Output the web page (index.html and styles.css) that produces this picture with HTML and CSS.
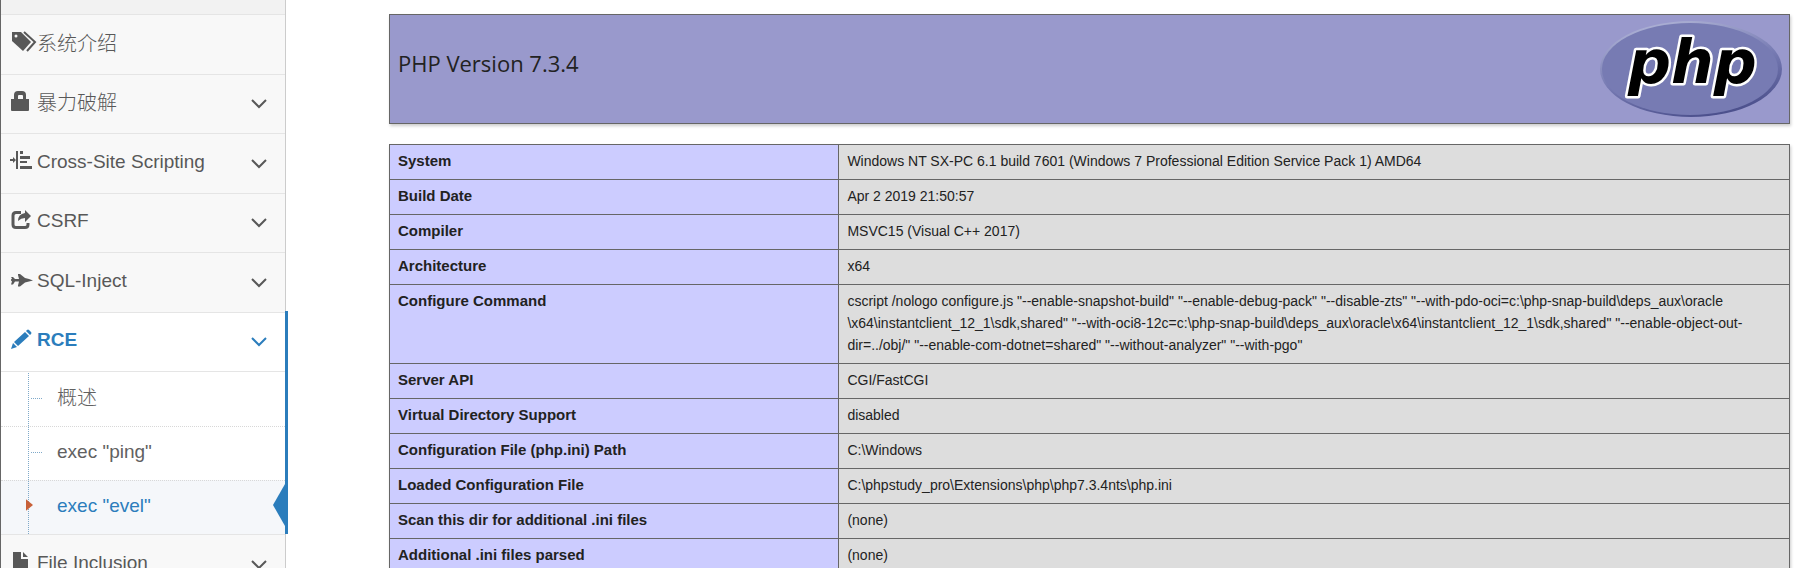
FILE: index.html
```html
<!DOCTYPE html>
<html lang="zh-CN">
<head>
<meta charset="utf-8">
<title>phpinfo</title>
<link rel="stylesheet" href="styles.css">
</head>
<body>
<div class="layout">
  <nav class="sidebar">
    <ul class="menu">
      <li class="menu-item"><a class="menu-link" href="#">
        <svg class="icon wide" viewBox="0 0 26 22"><path d="M1 1h9l10 10-8 9L1 10z"/><circle class="hole" cx="5" cy="5" r="1.5"/><path class="line" d="M13 1l11 10-8 9"/></svg>
        <span class="label han">系统介绍</span></a></li>
      <li class="menu-item"><a class="menu-link" href="#">
        <svg class="icon" viewBox="0 0 22 22"><path d="M0 9h3V5q0-4 4-4h4q4 0 4 4v4h3v11q0 1-1 1H1q-1 0-1-1zM7 9h5V6q0-1-1-1H8q-1 0-1 1z" fill-rule="evenodd"/></svg>
        <span class="label han">暴力破解</span>
        <svg class="chevron" viewBox="0 0 16 10"><path d="M1 1l7 7 7-7"/></svg></a></li>
      <li class="menu-item"><a class="menu-link" href="#">
        <svg class="icon" viewBox="0 0 22 22"><path d="M-1 9h3V7l3 3-3 3v-2h-3zM5 1h2v18H5zM9 1h3v3H9zM9 6h10v3H9zM9 11h7v2H9zM9 16h12v3H9z"/></svg>
        <span class="label">Cross-Site Scripting</span>
        <svg class="chevron" viewBox="0 0 16 10"><path d="M1 1l7 7 7-7"/></svg></a></li>
      <li class="menu-item"><a class="menu-link" href="#">
        <svg class="icon" viewBox="0 0 22 22"><path class="thick" d="M10 3.500H5Q2 3.500 2 6.500v9q0 3 3 3h9q3 0 3-3V14"/><path d="M7 12q0-7 7-8V1l6 6-6 6V9q-4 0-7 3z"/></svg>
        <span class="label">CSRF</span>
        <svg class="chevron" viewBox="0 0 16 10"><path d="M1 1l7 7 7-7"/></svg></a></li>
      <li class="menu-item"><a class="menu-link" href="#">
        <svg class="icon" viewBox="0 0 22 22"><path d="M0 8h2l2 2h4L7 6V5h2l5 4 4 1 4 1.500-4 1-4 1-5 4H7v-1l1-4H4l-2 3H0l1-3-1-1v-1l1-1z"/></svg>
        <span class="label">SQL-Inject</span>
        <svg class="chevron" viewBox="0 0 16 10"><path d="M1 1l7 7 7-7"/></svg></a></li>
      <li class="menu-item open"><a class="menu-link" href="#">
        <svg class="icon" viewBox="0 0 22 22"><path d="M16 2q1-1 2 0l2 2q1 1 0 2l-1 1-4-4zM14 4l4 4L7 18l-4-4zM2 15l4 4-6 2z"/></svg>
        <span class="label">RCE</span>
        <svg class="chevron" viewBox="0 0 16 10"><path d="M1 1l7 7 7-7"/></svg></a>
        <ul class="submenu">
          <li class="sub-item"><a class="sub-link han" href="#">概述</a></li>
          <li class="sub-item"><a class="sub-link" href="#">exec "ping"</a></li>
          <li class="sub-item current"><a class="sub-link" href="#">exec "evel"</a></li>
        </ul>
      </li>
      <li class="menu-item"><a class="menu-link" href="#">
        <svg class="icon" viewBox="0 0 22 22"><path d="M2 1h8v7h7v13H2zM12 1l5 5h-5z"/></svg>
        <span class="label">File Inclusion</span>
        <svg class="chevron" viewBox="0 0 16 10"><path d="M1 1l7 7 7-7"/></svg></a></li>
    </ul>
  </nav>
  <main class="content">
    <header class="banner">
      <h1 class="version">PHP Version 7.3.4</h1>
      <svg class="logo" viewBox="0 0 182 96" role="img" aria-label="PHP logo">
        <defs><linearGradient id="rim" x1="0.300" y1="0" x2="0.700" y2="1"><stop offset="0" stop-color="#aeb2d5"/><stop offset="0.500" stop-color="#777bb3"/><stop offset="1" stop-color="#484c89"/></linearGradient></defs>
        <ellipse cx="91" cy="48" rx="91" ry="48" fill="url(#rim)"/>
        <ellipse cx="90" cy="48" rx="88" ry="46" fill="#777bb3"/>
        <text class="logo-text" x="28" y="62">php</text>
      </svg>
    </header>
    <table class="info">
      <tr><th scope="row">System</th><td>Windows NT SX-PC 6.1 build 7601 (Windows 7 Professional Edition Service Pack 1) AMD64</td></tr>
      <tr><th scope="row">Build Date</th><td>Apr 2 2019 21:50:57</td></tr>
      <tr><th scope="row">Compiler</th><td>MSVC15 (Visual C++ 2017)</td></tr>
      <tr><th scope="row">Architecture</th><td>x64</td></tr>
      <tr><th scope="row">Configure Command</th><td>cscript /nologo configure.js "--enable-snapshot-build" "--enable-debug-pack" "--disable-zts" "--with-pdo-oci=c:\php-snap-build\deps_aux\oracle<wbr>\x64\instantclient_12_1\sdk,shared" "--with-oci8-12c=c:\php-snap-build\deps_aux\oracle\x64\instantclient_12_1\sdk,shared" "--enable-object-out-dir=../obj/" "--enable-com-dotnet=shared" "--without-analyzer" "--with-pgo"</td></tr>
      <tr><th scope="row">Server API</th><td>CGI/FastCGI</td></tr>
      <tr><th scope="row">Virtual Directory Support</th><td>disabled</td></tr>
      <tr><th scope="row">Configuration File (php.ini) Path</th><td>C:\Windows</td></tr>
      <tr><th scope="row">Loaded Configuration File</th><td>C:\phpstudy_pro\Extensions\php\php7.3.4nts\php.ini</td></tr>
      <tr><th scope="row">Scan this dir for additional .ini files</th><td>(none)</td></tr>
      <tr><th scope="row">Additional .ini files parsed</th><td>(none)</td></tr>
    </table>
  </main>
</div>
</body>
</html>
```

FILE: styles.css
```css
* { box-sizing: border-box; }
body {
  margin: 0;
  height: 100vh;
  overflow: hidden;
  background: #fff;
  color: #222;
  font-family: "Liberation Sans", "Noto Sans CJK SC", sans-serif;
}
.layout { display: flex; align-items: stretch; min-height: 100vh; }
.sidebar {
  flex: 0 0 286px;
  padding-top: 14px;
  background: #f2f2f2;
  border-left: 1px solid #666;
  border-right: 1px solid #ccc;
}
.menu, .submenu { margin: 0; padding: 0; list-style: none; }
.menu-item { position: relative; background: #f8f8f8; }
.menu-link {
  display: flex;
  align-items: center;
  height: 60px;
  padding: 0 18px 4px 10px;
  border-top: 1px solid #e5e5e5;
  color: #585858;
  font-size: 19px;
  text-decoration: none;
}
.menu-item:nth-child(even) > .menu-link { height: 59px; }
.label { flex: 1; white-space: nowrap; }
.han {
  font-family: "Noto Sans CJK SC", sans-serif;
  font-size: 20px;
  font-weight: 300;
  line-height: 24px;
}
.icon { width: 22px; height: 22px; margin: 0 4px 2px 0; fill: currentColor; overflow: visible; }
.icon.wide { width: 26px; margin-right: 0; }
.icon .hole { fill: #f8f8f8; }
.icon .line { fill: none; stroke: currentColor; stroke-width: 2; }
.icon .thick { fill: none; stroke: currentColor; stroke-width: 3; }
.chevron { width: 16px; height: 10px; margin-top: 4px; fill: none; stroke: currentColor; stroke-width: 2; }
.open { background: #fff; }
.open > .menu-link { color: #2b7dbc; font-weight: bold; }
.open::after {
  content: "";
  position: absolute;
  top: -1px;
  bottom: 0;
  right: -3px;
  width: 3px;
  background: #2b7dbc;
}
.submenu { position: relative; border-top: 1px solid #e5e5e5; }
.submenu::before {
  content: "";
  position: absolute;
  z-index: 1;
  top: 1px;
  bottom: 0;
  left: 27px;
  border-left: 1px dotted #7fa9c9;
}
.sub-item { position: relative; }
.sub-item::before {
  content: "";
  position: absolute;
  top: 26px;
  left: 30px;
  width: 11px;
  border-top: 1px dotted #7fa9c9;
}
.sub-link {
  display: flex;
  align-items: center;
  height: 54px;
  padding: 0 16px 4px 56px;
  border-top: 1px dotted #d8d8d8;
  color: #616161;
  font-size: 19px;
  text-decoration: none;
}
.sub-link.han { font-size: 20px; }
.sub-item:first-child .sub-link { border-top: 0; }
.current { background: #f5f7fa; }
.current .sub-link { color: #2b7dbc; }
.current::before {
  z-index: 2;
  top: 16px;
  left: 25px;
  width: 7px;
  height: 18px;
  border: 0;
  background: #c86139;
  clip-path: polygon(0 18%, 100% 50%, 0 82%);
}
.current::after {
  content: "";
  position: absolute;
  top: 4px;
  right: 0;
  width: 12px;
  height: 42px;
  background: #2b7dbc;
  clip-path: polygon(100% 0, 0 50%, 100% 100%);
}
.content { flex: 1; min-width: 0; padding: 14px 29px 0 103px; }
.banner {
  display: flex;
  align-items: flex-start;
  justify-content: space-between;
  height: 110px;
  margin-bottom: 20px;
  padding: 6px 7px 6px 8px;
  background: #99c;
  border: 1px solid #666;
  box-shadow: 1px 2px 3px #ccc;
}
.version {
  margin: 27px 0 0;
  font-family: "Open Sans", sans-serif;
  font-size: 22px;
  font-weight: normal;
  line-height: 30px;
}
.logo { width: 182px; height: 96px; }
.logo-text {
  font-family: "DejaVu Sans", sans-serif;
  font-size: 60px;
  font-style: italic;
  font-weight: bold;
  fill: #000;
  stroke: #fff;
  stroke-width: 5px;
  stroke-linejoin: round;
  paint-order: stroke;
}
.info {
  width: 100%;
  border-collapse: collapse;
  box-shadow: 1px 2px 3px #ccc;
  font-size: 14px;
  line-height: 22px;
}
.info th, .info td { padding: 5px 8px 7px; border: 1px solid #666; text-align: left; vertical-align: top; }
.info th { width: 32.100%; background: #ccf; font-size: 15px; }
.info td { background: #ddd; }
```
